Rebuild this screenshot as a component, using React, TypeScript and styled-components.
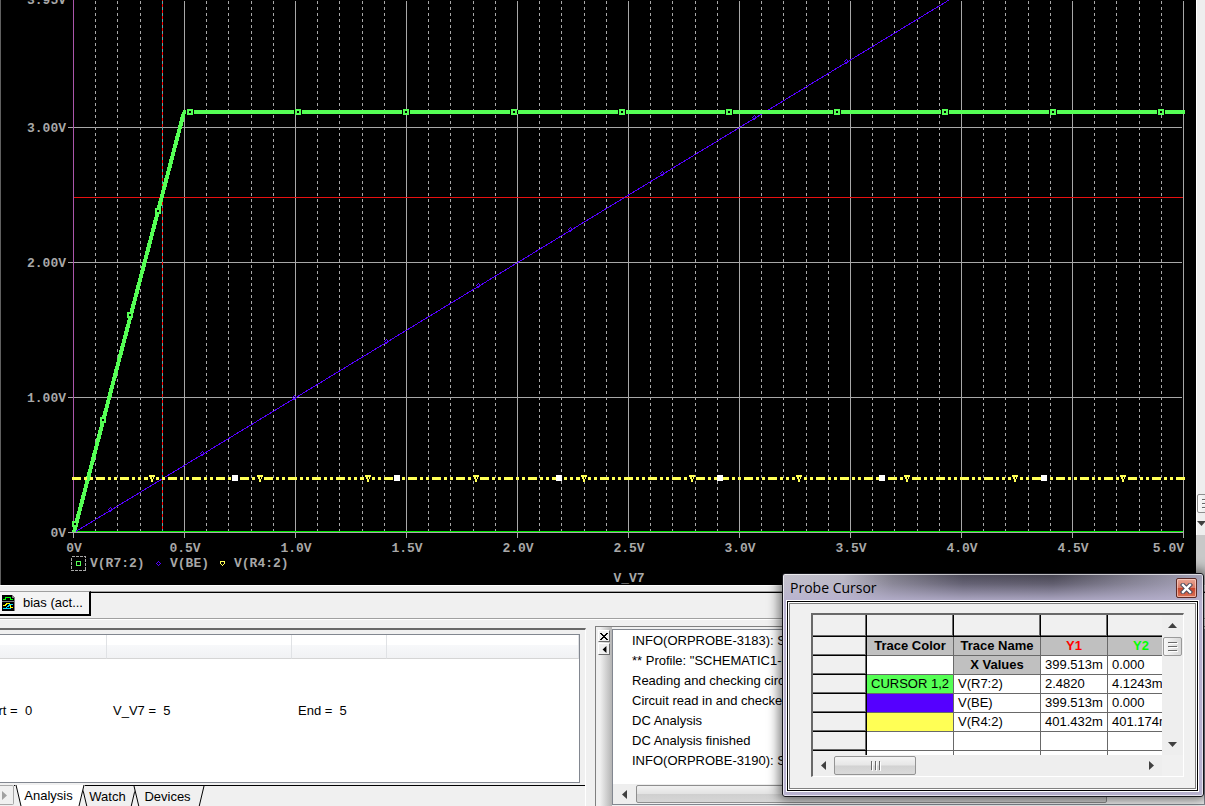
import React from "react";
import styled, { createGlobalStyle, css } from "styled-components";

const Global = createGlobalStyle`
  * { box-sizing: border-box; }
  body { margin: 0; background: #f0f0f0; overflow: hidden; }
  button { font: inherit; color: inherit; padding: 0; border: 0; background: none; }
  table { border-collapse: separate; border-spacing: 0; }
`;

const Page = styled.main`
  position: relative;
  display: flex;
  flex-direction: column;
  height: 100vh;
  overflow: hidden;
  font: 13px/20px "Liberation Sans", Arial, sans-serif;
  color: #000;
`;

/* ---------- plot ---------- */
const PlotRow = styled.section`
  display: flex;
  flex: none;
  background: #000;
`;
const PlotArea = styled.div`
  flex: 1;
  min-width: 0;
  border-left: 1px solid #606060;
`;
const PlotSvg = styled.svg`
  display: block;
  width: 100%;
  height: auto;
  shape-rendering: crispEdges;
`;
const AxisText = styled.text`
  font: bold 13px "Liberation Mono", "Courier New", monospace;
  fill: #a8a8a8;
`;
const PlotScroll = styled.div`
  flex: 0 0 9px;
  display: flex;
  flex-direction: column;
  overflow: hidden;
  background: #c8c8c8;
`;
const PlotTrack = styled.div`
  flex: 0 0 535px;
  display: flex;
  flex-direction: column;
  justify-content: flex-end;
  background: #eeeeee;
  border-left: 1px solid #fff;
`;
const PlotTrackEnd = styled.div`
  display: flex;
  flex-direction: column;
  gap: 6px;
  padding-bottom: 7px;
`;
const PlotThumb = styled.button`
  width: 17px;
  height: 19px;
  border: 1px solid #8e8e8e;
  border-radius: 2px;
  background: linear-gradient(90deg, #fafafa, #dcdcdc);
  display: flex;
  align-items: center;
  padding-left: 3px;
`;

/* ---------- document tabs ---------- */
const TabStrip = styled.nav`
  flex: none;
  display: flex;
  height: 34px;
  padding-top: 5px;
  background: #f0f0f0;
  border-top: 1px solid #fff;
  border-bottom: 1px solid #a0a0a0;
`;
const DocTab = styled.button`
  display: flex;
  align-items: center;
  gap: 8px;
  width: 91px;
  height: 25px;
  padding-left: 2px;
  border-top: 1px solid #a0a0a0;
  border-right: 2px solid #000;
  border-bottom: 2px solid #000;
  background: #f4f4f4;
  white-space: nowrap;
`;
const TabRule = styled.div`
  flex: 1;
  height: 2px;
  background: linear-gradient(#a0a0a0 0 1px, #000 1px);
`;

/* ---------- lower panes ---------- */
const Lower = styled.section`
  flex: 1;
  min-height: 0;
  display: grid;
  grid-template-columns: 586fr 610fr;
  column-gap: 9px;
  border-top: 1px solid #fff;
  background: #f0f0f0;
`;
const LeftPane = styled.div`
  display: flex;
  flex-direction: column;
  min-width: 0;
  margin-top: 8px;
  border-top: 2px solid #696969;
  border-right: 1px solid #fff;
  overflow: hidden;
`;
const ListBox = styled.div`
  flex: 1;
  min-height: 0;
  margin: 4px 5px 2px 0;
  border: 1px solid #828790;
  border-left: 0;
  background: #fff;
  overflow: hidden;
`;
const ListTable = styled.table`
  table-layout: fixed;
  width: calc(100% + 27px);
  margin-left: -27px;
`;
const ListHead = styled.th`
  height: 24px;
  padding: 0;
  border-right: 1px solid #e0e2e5;
  border-bottom: 1px solid #d5d5d5;
  background: linear-gradient(#fff 0 10px, #f7f8fa 10px, #f1f2f4);
`;
const ListCell = styled.td`
  height: 104px;
  padding: 0 0 0 6px;
  white-space: pre;
`;
const SheetTabs = styled.div`
  flex: none;
  display: flex;
  height: 21px;
`;
const SheetScroll = styled.button`
  width: 14px;
  height: 20px;
  border: 1px solid #a8a8a8;
  border-left: 0;
  border-radius: 0 2px 2px 0;
  display: flex;
  align-items: center;
`;
const SheetTabsRun = styled.div`
  flex: 1;
  display: flex;
  border-top: 1px solid #000;
  padding-left: 1px;
`;
const SheetTab = styled.button<{ $w: number; $active?: boolean }>`
  position: relative;
  width: ${(p) => p.$w}px;
  height: 21px;
  margin-right: -4px;
  padding-right: 3px;
  z-index: ${(p) => (p.$active ? 2 : 1)};
  ${(p) => p.$active && css`margin-top: -1px; padding-top: 1px;`}
`;
const SheetShape = styled.svg`
  position: absolute;
  inset: 0;
  width: 100%;
  height: 100%;
  z-index: -1;
`;

const RightPane = styled.div`
  display: flex;
  min-width: 0;
  margin-top: 6px;
  border-top: 1px solid #808080;
  border-left: 1px solid #808080;
`;
const Gutter = styled.div`
  flex: 0 0 16px;
  display: flex;
  flex-direction: column;
  gap: 1px;
  padding: 3px 2px;
  background: linear-gradient(90deg, #f0f0f0 0 4px, #b4b4b4);
`;
const TinyButton = styled.button`
  width: 12px;
  height: 12px;
  display: flex;
  align-items: center;
  justify-content: center;
  background: #f0f0f0;
  border: 1px solid #fff;
  border-right-color: #696969;
  border-bottom-color: #696969;
`;
const LogBox = styled.div`
  flex: 1;
  min-width: 0;
  display: flex;
  flex-direction: column;
  margin: 2px 0 1px;
  border: 1px solid #828790;
  background: #fff;
`;
const LogLines = styled.div`
  flex: 1;
  min-height: 0;
  overflow: hidden;
  padding: 1px 0 0 19px;
  white-space: nowrap;
`;
const LogLine = styled.p`
  margin: 0;
`;
const LogScroll = styled.div`
  flex: 0 0 20px;
  display: flex;
  align-items: center;
  background: #eeeeee;
`;
const LogArrow = styled.button`
  flex: 0 0 23px;
  display: flex;
  justify-content: center;
`;
const LogThumb = styled.button`
  width: 471px;
  height: 18px;
  border: 1px solid #8e8e8e;
  border-radius: 2px;
  background: linear-gradient(#f2f2f2, #e2e2e2 50%, #cfcfcf 50%, #d6d6d6);
`;

/* ---------- floating window ---------- */
const Dialog = styled.section`
  position: absolute;
  right: 1px;
  top: 573px;
  width: 422px;
  height: 224px;
  display: flex;
  flex-direction: column;
  padding: 0 5px 5px 4px;
  border: 1px solid #16161c;
  border-radius: 3px;
  background:
    linear-gradient(180deg, rgba(184, 178, 208, 0) 0, rgba(184, 178, 208, 0.25) 10px, rgba(184, 178, 208, 0.95) 28px),
    linear-gradient(90deg, #c4c2cc 0, #bab8c4 60px, #7c7a86 110px, #4b4957 180px, #45434f 270px, #7b7988 350px, #a4a1b6 100%);
  box-shadow: inset 0 0 0 1px rgba(255, 255, 255, 0.65), 0 0 12px 3px rgba(0, 0, 0, 0.55);
`;
const TitleBar = styled.header`
  flex: 0 0 27px;
  display: flex;
  justify-content: space-between;
  align-items: flex-start;
  padding-left: 3px;
`;
const Title = styled.h1`
  margin: 0;
  padding-top: 4px;
  font: 14px/20px "Open Sans", "Noto Sans", sans-serif;
`;
const CloseButton = styled.button`
  width: 21px;
  height: 20px;
  margin-top: 4px;
  margin-right: 1px;
  display: flex;
  align-items: center;
  justify-content: center;
  border: 1px solid #5c2a26;
  border-radius: 2px;
  background: linear-gradient(#e9a695, #da7a66 48%, #c5432b 52%, #dc7358);
  box-shadow: inset 0 0 0 1px rgba(255, 220, 210, 0.6);
`;
const Client = styled.div`
  flex: 1;
  min-height: 0;
  display: flex;
  border: 1px solid #000;
  outline: 1px solid #ffffff;
  padding: 1px;
  background: #fff;
`;
const ClientInner = styled.div`
  flex: 1;
  min-width: 0;
  display: flex;
  padding: 9px 11px 11px 21px;
  border: 1px solid #808080;
  background: #f0f0f0;
`;
const GridFrame = styled.div`
  flex: 1;
  min-width: 0;
  display: grid;
  grid-template-columns: minmax(0, 1fr) 21px;
  grid-template-rows: minmax(0, 1fr) 21px;
  border: 2px solid #696969;
  border-right: 1px solid #fff;
  border-bottom: 1px solid #fff;
`;
const GridView = styled.div`
  overflow: hidden;
  background: #fff;
`;
const Grid = styled.table`
  table-layout: fixed;
  width: 362px;
  line-height: 17px;
  white-space: nowrap;
`;
const Cell = styled.td<{ $bg?: string }>`
  height: 19px;
  padding: 0 0 1px 4px;
  overflow: hidden;
  background: ${(p) => p.$bg ?? "#fff"};
  border-right: 1px solid #696969;
  border-bottom: 1px solid #696969;
`;
const HeadCell = styled.th<{ $color?: string }>`
  height: 19px;
  padding: 0 0 1px;
  background: #c0c0c0;
  color: ${(p) => p.$color ?? "#000"};
  border-right: 1px solid #696969;
  border-bottom: 1px solid #696969;
`;
const StubCell = styled.td<{ $tall?: boolean }>`
  height: ${(p) => (p.$tall ? 22 : 19)}px;
  padding: 0;
  background: #f0f0f0;
  border-right: 1px solid #000;
  border-bottom: 1px solid #000;
  box-shadow: inset -1px -1px 0 #696969;
`;
const VScroll = styled.div`
  display: flex;
  flex-direction: column;
  align-items: center;
  justify-content: space-between;
  padding: 6px 0;
  background: #eeeeee;
`;
const VTop = styled.div`
  display: flex;
  flex-direction: column;
  align-items: center;
  gap: 7px;
`;
const VThumb = styled.button`
  width: 19px;
  height: 19px;
  display: flex;
  align-items: center;
  justify-content: center;
  border: 1px solid #9a9a9a;
  border-radius: 2px;
  background: linear-gradient(90deg, #f8f8f8, #d8d8d8);
`;
const HScroll = styled.div`
  display: flex;
  align-items: center;
  background: #eeeeee;
`;
const HArrow = styled.button`
  flex: 0 0 21px;
  display: flex;
  justify-content: center;
`;
const HThumb = styled.button`
  width: 82px;
  height: 19px;
  display: flex;
  align-items: center;
  justify-content: center;
  border: 1px solid #949494;
  border-radius: 2px;
  background: linear-gradient(#f4f4f4, #e6e6e6 48%, #d2d2d2 52%, #dadada);
`;
const HTrack = styled.div`
  flex: 1;
`;
const ArrowSvg = styled.svg<{ $turn: number }>`
  display: block;
  transform: rotate(${(p) => p.$turn}deg);
`;

const Arrow = ({ turn, size = 9, fill = "#404040" }: { turn: number; size?: number; fill?: string }) => (
  <ArrowSvg $turn={turn} width={size} height={size} viewBox="0 0 9 9" aria-hidden="true">
    <path d="M0 7L4.5 2L9 7Z" fill={fill} />
  </ArrowSvg>
);

const Grip = ({ vertical }: { vertical?: boolean }) => (
  <svg width="11" height="11" viewBox="0 0 11 11" shapeRendering="crispEdges" aria-hidden="true">
    {[0, 4, 8].map((o) =>
      vertical ? (
        <g key={o}>
          <rect x={o + 1} y="1" width="1" height="9" fill="#6a6a6a" />
          <rect x={o + 2} y="2" width="1" height="9" fill="#fff" />
        </g>
      ) : (
        <g key={o}>
          <rect x="1" y={o + 1} width="9" height="1" fill="#6a6a6a" />
          <rect x="2" y={o + 2} width="9" height="1" fill="#fff" />
        </g>
      )
    )}
  </svg>
);

/* plot geometry, in svg units */
const X0 = 73;
const MAJOR = 111;
const Y0 = 532;
const VOLT = 135;
const majors = Array.from({ length: 11 }, (_, i) => X0 + i * MAJOR);
const minorSteps = [22, 44, 67, 89];
const GREY = "#a8a8a8";
const GREEN = "#55ff55";
const BLUE = "#5500ff";
const YELLOW = "#ffff55";

const rampMarks = [[158, 211], [130, 315], [103, 420], [75, 524]];
const flatMarks = [190, 298, 406, 514, 622, 729, 837, 945, 1053, 1161];
const diamonds = Array.from({ length: 9 }, (_, i) => [110 + i * 92, 509 - i * 56]);
const triangles = [152, 260, 368, 476, 584, 692, 799, 907, 1015, 1123];
const squares = [235, 397, 559, 720, 882, 1044];

const GreenMark = ({ x, y }: { x: number; y: number }) => (
  <rect x={x - 2} y={y - 2} width="4" height="4" fill="#000" stroke={GREEN} strokeWidth="2" />
);
const Diamond = ({ x, y }: { x: number; y: number }) => (
  <path
    d={`M${x} ${y - 2}h1v1h-1z M${x - 1} ${y - 1}h1v1h-1z M${x + 1} ${y - 1}h1v1h-1z M${x - 2} ${y}h1v1h-1z M${x + 2} ${y}h1v1h-1z M${x - 1} ${y + 1}h1v1h-1z M${x + 1} ${y + 1}h1v1h-1z M${x} ${y + 2}h1v1h-1z`}
    fill={BLUE}
  />
);
const Triangle = ({ x, y }: { x: number; y: number }) => (
  <path
    d={`M${x - 2} ${y}h5v1h-5z M${x - 2} ${y + 1}h1v2h-1z M${x + 2} ${y + 1}h1v2h-1z M${x - 1} ${y + 3}h1v1h-1z M${x + 1} ${y + 3}h1v1h-1z M${x} ${y + 4}h1v1h-1z`}
    fill={YELLOW}
  />
);

const Plot = () => (
  <PlotSvg viewBox="1 0 1195 585" role="img" aria-label="DC sweep plot of V(R7:2), V(BE) and V(R4:2)">
    <g fill="none" stroke={GREY}>
      {majors.slice(0, 10).flatMap((m) =>
        minorSteps.map((s) => (
          <path key={m + s} d={`M${m + s + 0.5} 1V531`} strokeDasharray="3 3" />
        ))
      )}
      {majors.slice(1).map((m) => (
        <path key={m} d={`M${m + 0.5} 1V538`} />
      ))}
      {[1, 2, 3].map((v) => (
        <path key={v} d={`M68 ${Y0 - v * VOLT + 0.5}H1182`} />
      ))}
      <path d="M68 532.5H1184M73.5 532V538" />
    </g>
    <rect x="73" y="0" width="1" height="532" fill="#aa55aa" />
    <rect x="74" y="531" width="1109" height="1" fill="#00e800" />
    <rect x="74" y="197" width="1109" height="1" fill="#e81010" />
    <rect x="162" y="0" width="1" height="531" fill="#ff0000" />
    <path d="M162.5 1V531" stroke="#55aaaa" strokeDasharray="3 3" />

    <path d="M75 532L949 0" stroke={BLUE} fill="none" />
    {diamonds.map(([x, y]) => <Diamond key={x} x={x} y={y} />)}

    <path d="M74 532L184 112" stroke={GREEN} strokeWidth="4" fill="none" />
    <path d="M183 112H1185" stroke={GREEN} strokeWidth="4" fill="none" />
    {rampMarks.map(([x, y]) => <GreenMark key={x} x={x} y={y} />)}
    {flatMarks.map((x) => (
      <g key={x}>
        <rect x={x - 4} y="110" width="8" height="4" fill="#000" />
        <GreenMark x={x} y={112} />
      </g>
    ))}

    <path d="M72 478.5H1185" stroke={YELLOW} strokeWidth="3" strokeDasharray="9 3 3 3 3 3" />
    {triangles.map((x) => (
      <g key={x}>
        <rect x={x - 4} y="477" width="8" height="3" fill="#000" />
        <path d={`M${x - 3} 475h6v2h-1v2h-1v3h-2v-3h-1v-2h-1z`} fill={YELLOW} />
        <rect x={x} y="477" width="1" height="2" fill="#000" />
      </g>
    ))}
    {squares.map((x) => (
      <rect key={x} x={x - 3} y="475" width="6" height="6" fill="#fff" />
    ))}

    <AxisText x="66" y="4" textAnchor="end">3.95V</AxisText>
    {[3, 2, 1].map((v) => (
      <AxisText key={v} x="66" y={Y0 - v * VOLT + 5} textAnchor="end">{`${v}.00V`}</AxisText>
    ))}
    <AxisText x="66" y="537" textAnchor="end">0V</AxisText>
    {majors.slice(0, 10).map((m, i) => (
      <AxisText key={m} x={m + 1} y="552" textAnchor="middle">
        {i === 0 ? "0V" : `${(i / 2).toFixed(1)}V`}
      </AxisText>
    ))}
    <AxisText x="1184" y="552" textAnchor="end">5.0V</AxisText>
    <AxisText x="629" y="582" textAnchor="middle">V_V7</AxisText>

    <rect x="71.5" y="556.5" width="14" height="14" fill="none" stroke={GREY} strokeDasharray="3 1" />
    <rect x="76.5" y="561.5" width="4" height="4" fill="none" stroke={GREEN} />
    <AxisText x="90" y="567">V(R7:2)</AxisText>
    <Diamond x={158} y={563} />
    <AxisText x="170" y="567">V(BE)</AxisText>
    <Triangle x={222} y={561} />
    <AxisText x="234" y="567">V(R4:2)</AxisText>
  </PlotSvg>
);

const WaveIcon = () => (
  <svg width="13" height="16" viewBox="0 0 13 16" shapeRendering="crispEdges" aria-hidden="true">
    <path d="M0 0H10L13 3V16H0Z" fill="#000" />
    <path d="M10 0L13 3V16H12V3H10Z" fill="#808080" />
    <path d="M1 4.5H3.5V2.5H8.5V4.5H11" fill="none" stroke="#00ff00" />
    <path d="M0 6.5H12" stroke="#808080" />
    <path d="M1 10.5H3L5 8.5H7L9 12.5H11" fill="none" stroke="#ffff00" />
    <path d="M1 13.5H3L6 11.5L8 9.5H11M4 13.5H9" fill="none" stroke="#00e0ff" />
  </svg>
);

const sheets = [
  { name: "Analysis", w: 70, active: true },
  { name: "Watch", w: 56 },
  { name: "Devices", w: 72 },
];

const log = [
  "INFO(ORPROBE-3183): Simulation Profile",
  "** Profile: \"SCHEMATIC1-bias\"",
  "Reading and checking circuit",
  "Circuit read in and checked, no errors",
  "DC Analysis",
  "DC Analysis finished",
  "INFO(ORPROBE-3190): Simulation complete",
];

const traces = [
  { color: "#55ff55", tag: "CURSOR 1,2", name: "V(R7:2)", y1: "2.4820", y2: "4.1243m" },
  { color: "#5500ff", tag: "", name: "V(BE)", y1: "399.513m", y2: "0.000" },
  { color: "#ffff55", tag: "", name: "V(R4:2)", y1: "401.432m", y2: "401.174m" },
  { color: "#ffffff", tag: "", name: "", y1: "", y2: "" },
  { color: "#ffffff", tag: "", name: "", y1: "", y2: "" },
];

const ProbeCursor = () => (
  <Dialog role="dialog" aria-label="Probe Cursor">
    <TitleBar>
      <Title>Probe Cursor</Title>
      <CloseButton aria-label="Close">
        <svg width="13" height="11" viewBox="0 0 13 11" aria-hidden="true">
          <path d="M3 2L10 9M10 2L3 9" stroke="#4a4a5c" strokeWidth="4.4" strokeLinecap="square" />
          <path d="M3 2L10 9M10 2L3 9" stroke="#fff" strokeWidth="2.4" strokeLinecap="square" />
        </svg>
      </CloseButton>
    </TitleBar>
    <Client>
      <ClientInner>
        <GridFrame>
          <GridView>
            <Grid>
              <colgroup>
                <col style={{ width: 54 }} />
                <col style={{ width: 87 }} />
                <col style={{ width: 87 }} />
                <col style={{ width: 67 }} />
                <col style={{ width: 67 }} />
              </colgroup>
              <tbody>
                <tr>{[0, 1, 2, 3, 4].map((i) => <StubCell key={i} $tall />)}</tr>
                <tr>
                  <StubCell />
                  <HeadCell scope="col">Trace Color</HeadCell>
                  <HeadCell scope="col">Trace Name</HeadCell>
                  <HeadCell scope="col" $color="#ff0000">Y1</HeadCell>
                  <HeadCell scope="col" $color="#00ff00">Y2</HeadCell>
                </tr>
                <tr>
                  <StubCell />
                  <Cell />
                  <HeadCell scope="row">X Values</HeadCell>
                  <Cell>399.513m</Cell>
                  <Cell>0.000</Cell>
                </tr>
                {traces.map((t, i) => (
                  <tr key={i}>
                    <StubCell />
                    <Cell $bg={t.color}>{t.tag}</Cell>
                    <Cell>{t.name}</Cell>
                    <Cell>{t.y1}</Cell>
                    <Cell>{t.y2}</Cell>
                  </tr>
                ))}
              </tbody>
            </Grid>
          </GridView>
          <VScroll>
            <VTop>
              <Arrow turn={0} />
              <VThumb aria-label="Scroll rows"><Grip /></VThumb>
            </VTop>
            <Arrow turn={180} />
          </VScroll>
          <HScroll>
            <HArrow aria-label="Scroll left"><Arrow turn={-90} /></HArrow>
            <HThumb aria-label="Scroll columns"><Grip vertical /></HThumb>
            <HTrack />
            <HArrow aria-label="Scroll right"><Arrow turn={90} /></HArrow>
          </HScroll>
        </GridFrame>
      </ClientInner>
    </Client>
  </Dialog>
);

export default function App() {
  return (
    <>
      <Global />
      <Page>
        <PlotRow>
          <PlotArea><Plot /></PlotArea>
          <PlotScroll>
            <PlotTrack>
              <PlotTrackEnd>
                <PlotThumb aria-label="Scroll plot"><Grip /></PlotThumb>
                <Arrow turn={180} />
              </PlotTrackEnd>
            </PlotTrack>
          </PlotScroll>
        </PlotRow>

        <TabStrip>
          <DocTab><WaveIcon />bias (act...</DocTab>
          <TabRule />
        </TabStrip>

        <Lower>
          <LeftPane>
            <ListBox>
              <ListTable>
                <colgroup>
                  <col style={{ width: 134 }} />
                  <col style={{ width: 185 }} />
                  <col style={{ width: 95 }} />
                  <col />
                </colgroup>
                <thead>
                  <tr>{[0, 1, 2, 3].map((i) => <ListHead key={i} />)}</tr>
                </thead>
                <tbody>
                  <tr>
                    <ListCell>{"Start =  0"}</ListCell>
                    <ListCell>{"V_V7 =  5"}</ListCell>
                    <ListCell>{"End =  5"}</ListCell>
                    <ListCell />
                  </tr>
                </tbody>
              </ListTable>
            </ListBox>
            <SheetTabs>
              <SheetScroll aria-label="Next sheet"><Arrow turn={90} fill="#a0a0a0" /></SheetScroll>
              <SheetTabsRun>
                {sheets.map((s) => (
                  <SheetTab key={s.name} $w={s.w} $active={s.active}>
                    <SheetShape viewBox={`0 0 ${s.w} 21`} preserveAspectRatio="none" aria-hidden="true">
                      <path d={`M0 0L6 21H${s.w - 6}L${s.w} 0Z`} fill={s.active ? "#fff" : "#f0f0f0"} />
                      <path d={`M1 0L6 21M${s.w - 6} 21L${s.w - 1} 0`} stroke="#000" fill="none" />
                    </SheetShape>
                    {s.name}
                  </SheetTab>
                ))}
              </SheetTabsRun>
            </SheetTabs>
          </LeftPane>

          <RightPane>
            <Gutter>
              <TinyButton aria-label="Close pane">
                <svg width="8" height="7" viewBox="0 0 8 7" shapeRendering="crispEdges" aria-hidden="true">
                  <path d="M0 0h2v1h1v1h2v-1h1v-1h2v1h-1v1h-1v1h-1v1h1v1h1v1h1v1h-2v-1h-1v-1h-2v1h-1v1h-2v-1h1v-1h1v-1h1v-1h-1v-1h-1v-1h-1z" />
                </svg>
              </TinyButton>
              <TinyButton aria-label="Collapse pane"><Arrow turn={-90} size={7} fill="#000" /></TinyButton>
            </Gutter>
            <LogBox>
              <LogLines>
                {log.map((l) => <LogLine key={l}>{l}</LogLine>)}
              </LogLines>
              <LogScroll>
                <LogArrow aria-label="Scroll left"><Arrow turn={-90} /></LogArrow>
                <LogThumb aria-label="Scroll log" />
              </LogScroll>
            </LogBox>
          </RightPane>
        </Lower>
        <ProbeCursor />
      </Page>
    </>
  );
}
